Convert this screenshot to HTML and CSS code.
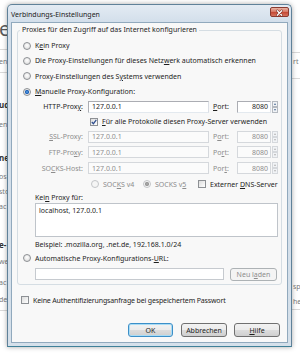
FILE: index.html
```html
<!DOCTYPE html>
<html lang="de">
<head>
    <meta charset="UTF-8">
    <meta name="viewport" content="width=device-width, initial-scale=1.0">
    <title>Verbindungs-Einstellungen</title>
    <link rel="stylesheet" href="styles.css">
</head>
<body>
    <!-- page behind the dialog, only the edges show -->
    <div class="backdrop">
        <div class="side side-left">
            <div class="frag frag-head mt-18">e</div>
            <div class="rule mt-9"></div>
            <div class="frag mt-6">en</div>
            <div class="rule mt-4"></div>
            <div class="frag frag-bold mt-26">ud</div>
            <div class="frag mt-8">en</div>
            <div class="frag frag-bold mt-21">ne</div>
            <div class="frag mt-7">os</div>
            <div class="frag mt-3">sto</div>
            <div class="frag mt-3">ac</div>
            <div class="frag frag-bold mt-26">e-</div>
            <div class="frag mt-5">we</div>
            <div class="frag mt-9">ac</div>
            <div class="frag mt-5">de</div>
            <div class="rule mt-4"></div>
        </div>
        <div class="side side-right">
            <div class="rule mt-52"></div>
            <div class="frag mt-3">rt</div>
            <div class="rule mt-10"></div>
            <div class="frag mt-202">sp</div>
            <div class="frag mt-3">he</div>
            <div class="rule mt-1"></div>
        </div>
    </div>

    <div class="dialog">
        <div class="titlebar">
            <span class="title">Verbindungs-Einstellungen</span>
            <span class="close">
                <svg width="19" height="10" viewBox="0 0 19 10">
                    <path d="M7 2.5 L12 7.5 M12 2.5 L7 7.5" stroke="#6b2a22" stroke-width="2.6" stroke-linecap="round"/>
                    <path d="M7 2.5 L12 7.5 M12 2.5 L7 7.5" stroke="#fff" stroke-width="1.4" stroke-linecap="round"/>
                </svg>
            </span>
        </div>

        <div class="client">
            <fieldset class="group">
                <legend>Proxies für den Zugriff auf das Internet konfigurieren</legend>

                <div class="row h15"><span class="radio"></span><span>K<u>e</u>in Proxy</span></div>
                <div class="row h15"><span class="radio"></span><span>Die Proxy-Einstellungen für dieses Netz<u>w</u>erk automatisch erkennen</span></div>
                <div class="row h16"><span class="radio"></span><span>Proxy-Einstellungen des S<u>y</u>stems verwenden</span></div>
                <div class="row h15"><span class="radio on"></span><span><u>M</u>anuelle Proxy-Konfiguration:</span></div>

                <div class="proxy h15">
                    <span class="plabel">HTTP-Prox<u>y</u>:</span>
                    <span class="field">127.0.0.1</span>
                    <span class="port"><u>P</u>ort:</span>
                    <span class="spin">
                        <span class="field num">8080</span>
                        <span class="arrows"><i class="up"></i><i class="down"></i></span>
                    </span>
                </div>
                <div class="proxy h15">
                    <span class="row wide">
                        <span class="check">
                            <svg width="6" height="6" viewBox="0 0 6 6"><path d="M0.8 3 L2.4 4.7 L5.3 0.9" fill="none" stroke="#2d4d8f" stroke-width="1.2"/></svg>
                        </span>
                        <span><u>F</u>ür alle Protokolle diesen Proxy-Server verwenden</span>
                    </span>
                </div>
                <div class="proxy dis h15">
                    <span class="plabel"><u>S</u>SL-Proxy:</span>
                    <span class="field">127.0.0.1</span>
                    <span class="port">P<u>o</u>rt:</span>
                    <span class="spin">
                        <span class="field num">8080</span>
                        <span class="arrows"><i class="up"></i><i class="down"></i></span>
                    </span>
                </div>
                <div class="proxy dis h16">
                    <span class="plabel">FTP-Pro<u>x</u>y:</span>
                    <span class="field">127.0.0.1</span>
                    <span class="port">Po<u>r</u>t:</span>
                    <span class="spin">
                        <span class="field num">8080</span>
                        <span class="arrows"><i class="up"></i><i class="down"></i></span>
                    </span>
                </div>
                <div class="proxy dis h16">
                    <span class="plabel">SO<u>C</u>KS-Host:</span>
                    <span class="field">127.0.0.1</span>
                    <span class="port">Por<u>t</u>:</span>
                    <span class="spin">
                        <span class="field num">8080</span>
                        <span class="arrows"><i class="up"></i><i class="down"></i></span>
                    </span>
                </div>
                <div class="proxy h16">
                    <span class="row wide socks">
                        <span class="opt opt-v4 dis"><span class="radio"></span><span>SOC<u>K</u>S v4</span></span>
                        <span class="opt opt-v5 dis"><span class="radio on"></span><span>SOCKS v<u>5</u></span></span>
                        <span class="opt"><span class="check"></span><span>Externer <u>D</u>NS-Server</span></span>
                    </span>
                </div>

                <div class="row indent h11"><span>Kei<u>n</u> Proxy für:</span></div>
                <div class="area">localhost, 127.0.0.1</div>
                <div class="row indent h14"><span>Beispiel: .mozilla.org, .net.de, 192.168.1.0/24</span></div>
                <div class="row h14"><span class="radio"></span><span>Automatische Proxy-Konfigurations-<u>U</u>RL:</span></div>
                <div class="row indent url">
                    <span class="field urlfield"></span>
                    <span class="btn btn-off"><span>Neu l<u>a</u>den</span></span>
                </div>
            </fieldset>

            <div class="row auth"><span class="check"></span><span class="auth-text">Keine Authentifizierungsanfrage bei gespeichertem Passwort</span></div>

            <div class="buttons">
                <span class="btn btn-default btn-ok">OK</span>
                <span class="btn btn-cancel">Abbrechen</span>
                <span class="btn"><span><u>H</u>ilfe</span></span>
            </div>
        </div>
    </div>
</body>
</html>
```

FILE: styles.css
```css
*{
    box-sizing: border-box;
    font-family: "Noto Sans", "DejaVu Sans", sans-serif;
}
body{
    margin: 0;
    width: 300px;
    height: 355px;
    overflow: hidden;
    position: relative;
    background: #fff;
    font-size: 7px;
    color: #1e1e1e;
}
u{
    text-underline-offset: 1px;
}

/* page behind */
.backdrop{
    display: flex;
    justify-content: space-between;
    height: 355px;
}
.side{
    display: flex;
    flex-direction: column;
}
.side-left{
    width: 7px;
}
.side-right{
    width: 8px;
}
.frag{
    flex-shrink: 0;
    white-space: nowrap;
    height: 12px;
    line-height: 12px;
    font-size: 7px;
    color: #7a7a7a;
}
.side-left .frag{
    margin-left: -1px;
}
.side-right .frag{
    padding-left: 1px;
}
.frag-head{
    height: 22px;
    line-height: 22px;
    font-size: 20px;
    color: #5a5a5a;
}
.frag-bold{
    font-weight: bold;
    font-size: 8px;
    color: #333;
}
.rule{
    flex-shrink: 0;
    height: 1px;
    background: #d9d9d9;
}
.mt-1{ margin-top: 1px; }
.mt-3{ margin-top: 3px; }
.mt-4{ margin-top: 4px; }
.mt-5{ margin-top: 5px; }
.mt-6{ margin-top: 6px; }
.mt-7{ margin-top: 7px; }
.mt-8{ margin-top: 8px; }
.mt-9{ margin-top: 9px; }
.mt-10{ margin-top: 10px; }
.mt-18{ margin-top: 18px; }
.mt-21{ margin-top: 21px; }
.mt-26{ margin-top: 26px; }
.mt-52{ margin-top: 52px; }
.mt-202{ margin-top: 202px; }

/* dialog window */
.dialog{
    position: absolute;
    left: 7px;
    top: 4px;
    width: 285px;
    height: 343px;
    display: flex;
    flex-direction: column;
    padding: 0 3px 3px 3px;
    border: 1px solid #5f8199;
    border-bottom-color: #3f8098;
    border-radius: 5px 5px 0 0;
    background: linear-gradient(#e3ebf3, #d2deea 18px, #d5e0ea);
    box-shadow: 0 0 5px rgba(0, 0, 0, .35);
}
.titlebar{
    height: 17px;
    flex-shrink: 0;
    display: flex;
    justify-content: space-between;
    align-items: center;
}
.title{
    color: #1b1b1b;
    padding-top: 1px;
}
.close{
    align-self: flex-start;
    margin-top: 2px;
    margin-right: -1px;
    width: 19px;
    height: 10px;
    border: 1px solid #8a3b30;
    border-radius: 2px;
    background: linear-gradient(#eab3a3, #d77a68 45%, #c44a36 55%, #d7735e);
    display: flex;
}
.client{
    flex: 1;
    background: #f8f8f8;
    border: 1px solid #91a9bd;
    padding: 2px 7px 0 0;
}

/* group box */
.group{
    margin: 0 -2px 0 5px;
    padding: 3px 3px 3px 5px;
    border: 1px solid #d5dde3;
    border-radius: 3px;
}
.group legend{
    padding: 0 2px;
    margin-left: -3px;
    line-height: 10px;
}
.row{
    display: flex;
    align-items: center;
    white-space: nowrap;
}
.h11{ height: 11px; }
.h14{ height: 14px; }
.h15{ height: 15px; }
.h16{ height: 16px; }
.indent{
    margin-left: 12px;
}

.radio{
    flex-shrink: 0;
    width: 8px;
    height: 8px;
    margin-right: 4px;
    border-radius: 50%;
    border: 1px solid #8d9094;
    background: radial-gradient(circle at 50% 40%, #ffffff, #e2e2e2 70%, #cfcfcf);
}
.radio.on{
    background: radial-gradient(circle, #5aa7ea 0, #1f5fb5 1.8px, #eeeeee 2.4px, #d6d6d6);
}
.check{
    flex-shrink: 0;
    width: 8px;
    height: 8px;
    margin-right: 4px;
    border: 1px solid #8d9094;
    background: linear-gradient(135deg, #dcdcdc, #ffffff);
    display: flex;
    align-items: center;
    justify-content: center;
}

/* proxy grid */
.proxy{
    display: grid;
    grid-template-columns: 61px 121px 20px 41px;
    column-gap: 4px;
    align-items: center;
}
.plabel{
    text-align: right;
    padding-right: 1px;
    white-space: nowrap;
}
.field{
    height: 12px;
    display: flex;
    align-items: center;
    padding: 0 2px 0 3px;
    background: #fff;
    border: 1px solid #abadb3;
    border-right-color: #dbdfe6;
    border-bottom-color: #e3e9ef;
    white-space: nowrap;
}
.port{
    white-space: nowrap;
}
.spin{
    display: flex;
    height: 12px;
}
.spin .num{
    flex: 1;
    justify-content: flex-end;
    margin-right: 1px;
}
.arrows{
    width: 6px;
    display: flex;
    flex-direction: column;
}
.arrows i{
    flex: 1;
    border: 1px solid #b4b9c0;
    background: #f1f3f6;
    display: flex;
    justify-content: center;
    align-items: center;
}
.arrows i::after{
    content: "";
    border-left: 1.5px solid transparent;
    border-right: 1.5px solid transparent;
}
.arrows .up::after{
    border-bottom: 2px solid #4f6f96;
}
.arrows .down::after{
    border-top: 2px solid #4f6f96;
}
.dis,
.dis .field{
    color: #8d8d8d;
}
.dis .field{
    border-color: #d5d8dc;
    background: #fbfbfb;
}
.dis .arrows i{
    border-color: #d5d8dc;
}
.dis .arrows i::after{
    border-bottom-color: #b4b4b4;
    border-top-color: #b4b4b4;
}
.dis .radio{
    border-color: #c3c5c8;
    background: #f5f5f5;
}
.dis .radio.on{
    background: radial-gradient(circle, #a9a9a9 0, #9a9a9a 1.8px, #f5f5f5 2.4px);
}
.wide{
    grid-column: 2 / -1;
    padding-left: 2px;
}
.socks{
    padding-left: 3px;
}
.opt{
    display: flex;
    align-items: center;
}
.opt-v4{
    width: 52px;
}
.opt-v5{
    width: 55px;
}

.area{
    margin-left: 12px;
    height: 34px;
    padding: 2px 3px;
    line-height: 10px;
    background: #fff;
    border: 1px solid #bfc4ca;
}
.url{
    height: 14px;
    margin-top: 2px;
    gap: 6px;
}
.urlfield{
    width: 189px;
    border-color: #c6cacf;
}

/* buttons */
.btn{
    display: flex;
    align-items: center;
    justify-content: center;
    width: 46px;
    height: 14px;
    border: 1px solid #707070;
    border-radius: 3px;
    background: linear-gradient(#f2f2f2, #ebebeb 50%, #dddddd 50%, #cfcfcf);
    white-space: nowrap;
}
.btn-off{
    width: 47px;
    height: 13px;
    color: #8d8d8d;
    border-color: #adb2b5;
    background: #f4f4f4;
}
.btn-default{
    border-color: #3c8fc8;
    box-shadow: inset 0 0 0 1px #a9dcf5;
}
.btn-ok{
    width: 45px;
}
.auth{
    height: 12px;
    margin: 9px 0 0 9px;
}
.auth-text{
    letter-spacing: -0.15px;
}
.buttons{
    display: flex;
    justify-content: flex-end;
    margin-top: 17px;
    gap: 7px;
}
.btn-cancel{
    margin-left: 1px;
}
```
